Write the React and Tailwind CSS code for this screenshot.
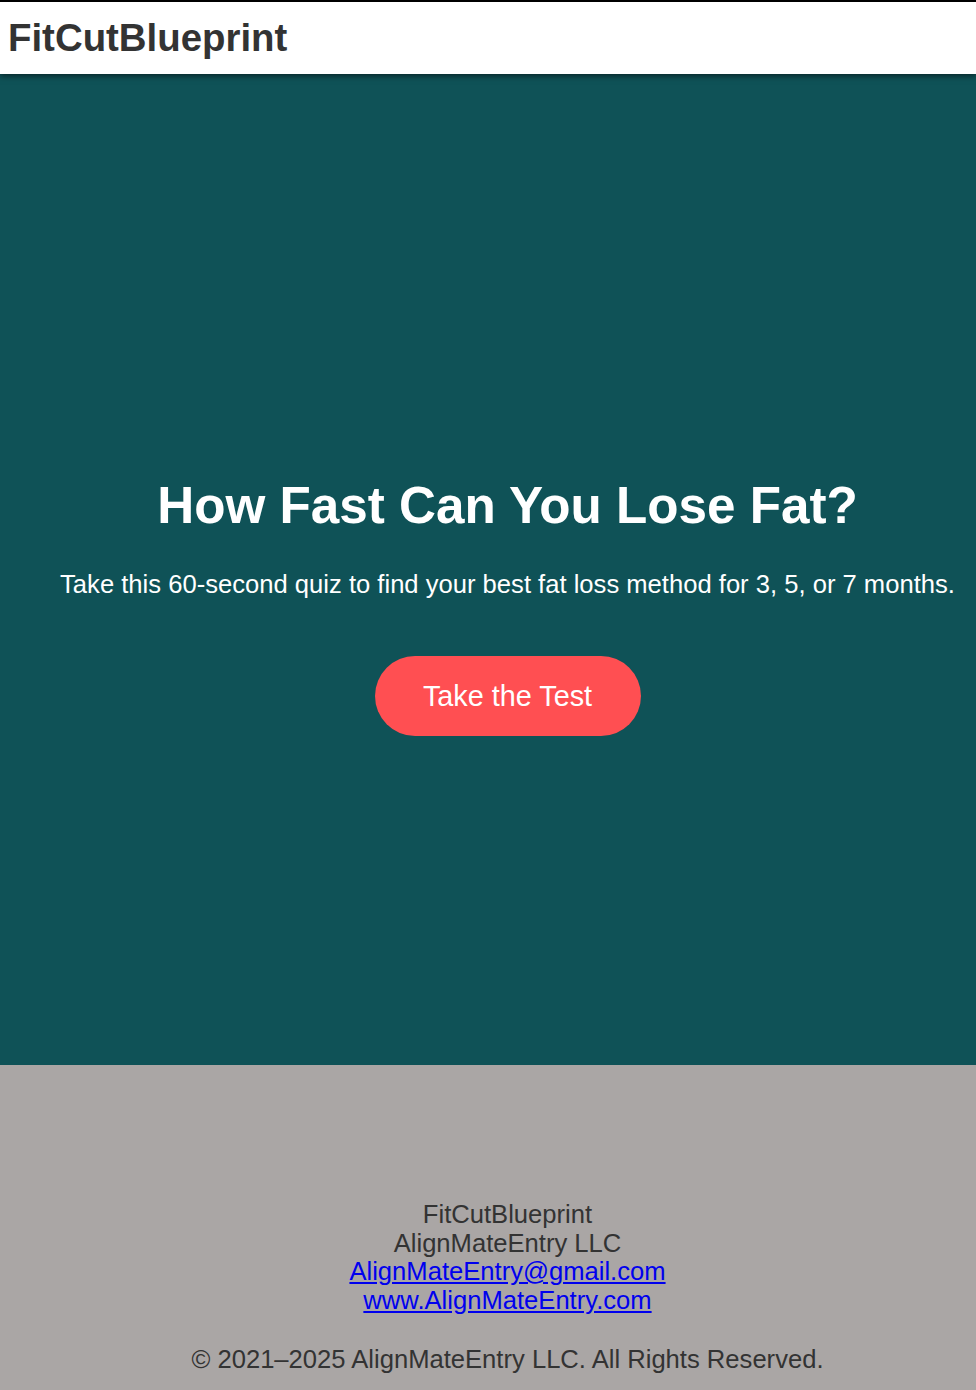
import React from "react";

const font = { fontFamily: '"Liberation Sans", Arial, Helvetica, sans-serif' };

const App = () => {
  return (
    <div className="min-h-screen bg-[#aaa6a5]" style={font}>
      {/* Header */}
      <header className="relative z-10 flex h-[74px] items-center border-t-2 border-black bg-white px-[8px] shadow-[0_2px_6px_rgba(0,0,0,0.55)]">
        <h1 className="text-[38.4px] font-bold leading-[44px] text-[#333333]">FitCutBlueprint</h1>
      </header>

      {/* Hero */}
      <section className="flex h-[991px] flex-col items-center justify-center bg-[#0f5257] pl-[39px] pt-[73px] text-center text-white">
        <h2 className="text-[51.2px] font-bold leading-[59px]">How Fast Can You Lose Fat?</h2>
        <p className="mt-[35px] whitespace-nowrap text-[25.6px] leading-[29.4px]">
          Take this 60-second quiz to find your best fat loss method for 3, 5, or 7 months.
        </p>
        <a
          href="#"
          className="mt-[57px] flex h-[80px] w-[266px] items-center justify-center rounded-full bg-[#ff4f52] text-[28.8px] leading-[33px] text-white"
        >
          Take the Test
        </a>
      </section>

      {/* Footer */}
      <footer className="bg-[#aaa6a5] pb-[17px] pl-[39px] pt-[135px] text-center text-[25.6px] leading-[28.6px] text-[#333333]">
        <p>FitCutBlueprint</p>
        <p>AlignMateEntry LLC</p>
        <p>
          <a href="#" className="text-[#0000ee] underline">
            AlignMateEntry@gmail.com
          </a>
        </p>
        <p>
          <a href="#" className="text-[#0000ee] underline">
            www.AlignMateEntry.com
          </a>
        </p>
        <p className="mt-[31px]">© 2021–2025 AlignMateEntry LLC. All Rights Reserved.</p>
      </footer>
    </div>
  );
};

export default App;
